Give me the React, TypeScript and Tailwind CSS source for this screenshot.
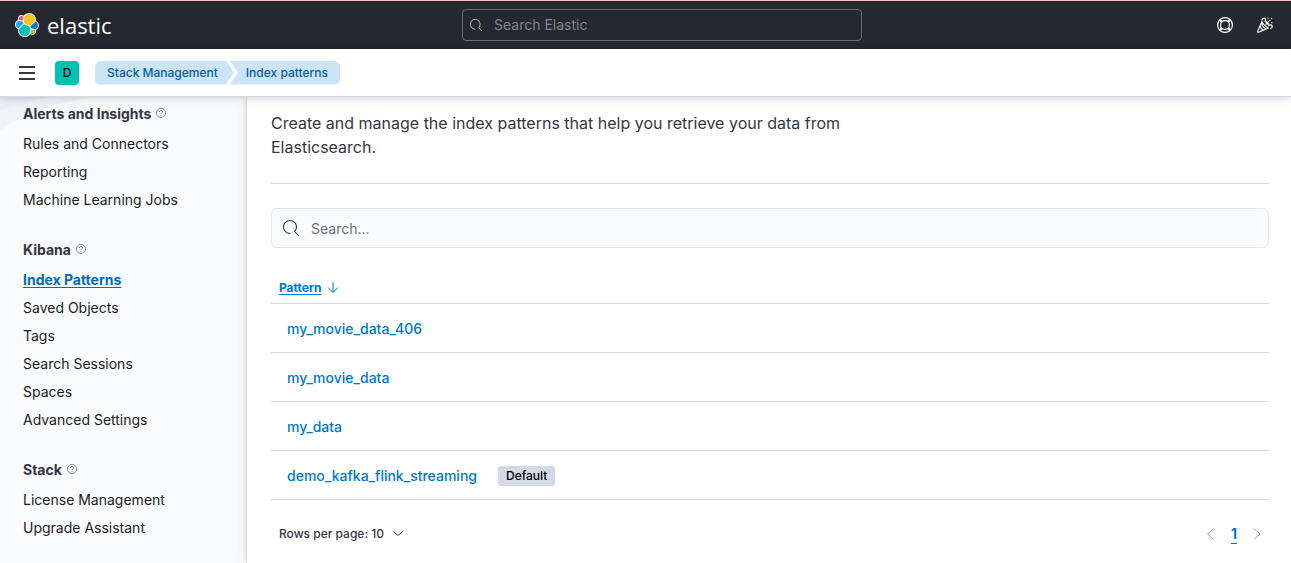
import React from "react";

type NavSection = { title: string; items: string[] };

const SECTIONS: NavSection[] = [
  { title: "Alerts and Insights", items: ["Rules and Connectors", "Reporting", "Machine Learning Jobs"] },
  {
    title: "Kibana",
    items: ["Index Patterns", "Saved Objects", "Tags", "Search Sessions", "Spaces", "Advanced Settings"],
  },
  { title: "Stack", items: ["License Management", "Upgrade Assistant"] },
];

const PATTERNS = [
  { name: "my_movie_data_406", isDefault: false },
  { name: "my_movie_data", isDefault: false },
  { name: "my_data", isDefault: false },
  { name: "demo_kafka_flink_streaming", isDefault: true },
];

function ElasticLogo() {
  return (
    <svg viewBox="0 0 32 32" className="h-6 w-6" aria-hidden="true">
      <path fill="#FFF" d="M32 16.77c0-2.682-1.664-5.023-4.163-5.937.11-.569.164-1.14.164-1.735C28.001 4.08 23.93 0 18.921 0c-2.93 0-5.656 1.406-7.367 3.784a4.789 4.789 0 00-2.944-.997c-2.652 0-4.81 2.162-4.81 4.82 0 .577.103 1.14.3 1.667C1.652 10.23 0 12.604 0 15.251c0 2.692 1.674 5.041 4.184 5.957-.109.554-.165 1.142-.165 1.735 0 5.003 4.06 9.074 9.05 9.074 2.93 0 5.646-1.412 7.348-3.791a4.75 4.75 0 002.944 1.02c2.652 0 4.81-2.163 4.81-4.82a4.8 4.8 0 00-.3-1.668C30.347 21.792 32 19.418 32 16.77" />
      <path fill="#FEC514" d="M12.58 13.787l7.002 3.211 7.066-6.213a7.849 7.849 0 00.152-1.557c0-4.287-3.464-7.774-7.722-7.774-2.549 0-4.928 1.267-6.366 3.388l-1.176 6.127 1.045 2.818z" />
      <path fill="#00BFB3" d="M5.333 21.228a7.938 7.938 0 00-.15 1.58c0 4.299 3.478 7.8 7.753 7.8 2.57 0 4.968-1.279 6.409-3.42l1.166-6.105-1.556-2.99-7.03-3.217-6.592 6.352z" />
      <path fill="#F04E98" d="M5.288 9.071l4.8 1.138L11.14 4.73a3.785 3.785 0 00-2.306-.78 3.83 3.83 0 00-3.546 5.12z" />
      <path fill="#1BA9F5" d="M4.87 10.214c-2.14.713-3.596 2.782-3.596 5.047 0 2.206 1.358 4.173 3.398 4.953l6.733-6.115-1.236-2.653-5.3-1.232z" />
      <path fill="#93C90E" d="M20.87 27.19a3.773 3.773 0 002.294.785 3.83 3.83 0 003.543-5.116l-4.794-1.126-1.044 5.457z" />
      <path fill="#07C" d="M21.844 20.479l5.278 1.24c2.14-.713 3.595-2.782 3.595-5.049 0-2.201-1.36-4.165-3.404-4.946l-6.902 6.067 1.433 2.688z" />
    </svg>
  );
}

function SearchIcon({ className }: { className: string }) {
  return (
    <svg viewBox="0 0 16 16" fill="currentColor" className={className} aria-hidden="true">
      <path d="M11.271 11.978l3.872 3.873a.502.502 0 00.708 0 .502.502 0 000-.708l-3.565-3.564c2.38-2.747 2.267-6.923-.342-9.532-2.73-2.73-7.17-2.73-9.898 0-2.728 2.729-2.728 7.17 0 9.9a6.955 6.955 0 004.949 2.05.5.5 0 000-1 5.96 5.96 0 01-4.242-1.757 6.01 6.01 0 010-8.486 6.004 6.004 0 018.484 0 6.01 6.01 0 010 8.486.5.5 0 00.034.738z" />
    </svg>
  );
}

function HelpRingIcon() {
  return (
    <svg viewBox="0 0 16 16" fill="none" stroke="currentColor" className="h-4 w-4" aria-hidden="true">
      <circle cx="8" cy="8" r="7.4" strokeWidth="1.2" />
      <circle cx="8" cy="8" r="4.4" strokeWidth="1.2" />
      <path strokeWidth="2.2" d="M3 3l1.900 1.900M13 3l-1.900 1.900M3 13l1.900-1.900M13 13l-1.900-1.900" />
    </svg>
  );
}

function CheerIcon() {
  return (
    <svg viewBox="0 0 16 16" fill="none" stroke="currentColor" strokeLinecap="round" strokeLinejoin="round" className="h-4 w-4" aria-hidden="true">
      <path strokeWidth="1.1" d="M4.800 4.600L.7 14.400c-.2.6.3 1 .9.8l9.700-4.300M4.800 4.600c1.300 2.900 3.600 5 6.500 6.300M4.800 4.600c-.4 3.500 1.400 6.700 4.400 7.200M3.200 8.900c.3 2.200 1.700 4 3.600 4.400" />
      <path strokeWidth="1.1" d="M4.900 3.300C5.200 1.600 6.600.6 7.700 1.200c1.100.7.9 2.200.3 3.400M8.800 7.400l2.800-2.800M9.300 4.500v2.400h2.400M11.200 8.400c1.600-.7 3.400-.5 3.900.6.4 1.100-.4 2.200-1.500 2.400" />
      <path strokeWidth="1.3" d="M11 1.200v.1M14.600 1.400v.1M12.800 3.300v.1M14.800 5.600v.1" />
    </svg>
  );
}

function QuestionIcon() {
  return (
    <svg viewBox="0 0 16 16" fill="none" stroke="currentColor" className="mb-[2px] h-[10px] w-[10px] text-[#69707d]" aria-hidden="true">
      <circle cx="8" cy="8" r="7.3" strokeWidth="1.2" />
      <path strokeWidth="1.4" d="M5.6 6.3c0-1.4 1-2.4 2.5-2.4s2.4.9 2.4 2.1c0 1.8-2.4 1.8-2.4 3.7M8.1 11v1.6" />
    </svg>
  );
}

function TopBar() {
  return (
    <header className="flex h-[49px] items-center border-t border-[#f2bcc3] bg-[#25282f] pl-[15px] pr-[18px] text-white">
      <div className="flex flex-1">
        <a href="#home" aria-label="Elastic home" className="flex items-center gap-2">
          <ElasticLogo />
          <span className="font-['Open_Sans',sans-serif] text-[22px] leading-8">elastic</span>
        </a>
      </div>
      <div className="ml-9 flex h-8 w-[400px] items-center gap-3 rounded border border-[#6b6e75] bg-[#25282f] px-[7px]">
        <SearchIcon className="h-3 w-3 shrink-0 text-[#c5c7cc]" />
        <input
          type="search"
          aria-label="Search Elastic"
          placeholder="Search Elastic"
          className="min-w-0 flex-1 bg-transparent text-sm text-white outline-none placeholder:text-[#81858f]"
        />
      </div>
      <div className="flex flex-1 justify-end gap-6">
        <button type="button" aria-label="Help menu">
          <HelpRingIcon />
        </button>
        <button type="button" aria-label="What's new">
          <CheerIcon />
        </button>
      </div>
    </header>
  );
}

function BreadcrumbBar() {
  return (
    <div className="relative z-10 flex h-12 items-center border-b border-[#d3dae6] bg-white pl-[19px] shadow-[0_1px_5px_rgba(0,0,0,0.1),0_4px_13px_rgba(0,0,0,0.07)]">
      <button type="button" aria-label="Toggle primary navigation" className="flex h-4 w-4 flex-col items-stretch justify-center gap-1">
        <span className="h-[2px] bg-[#343741]" />
        <span className="h-[2px] bg-[#343741]" />
        <span className="h-[2px] bg-[#343741]" />
      </button>
      <button type="button" aria-label="Default space" className="ml-5 h-6 w-6 rounded bg-[#00bfb3] text-xs font-medium text-black">
        D
      </button>
      <nav aria-label="Breadcrumbs" className="ml-4 flex text-xs font-medium leading-6 text-[#0061a6]">
        <a href="#management" className="rounded-l-md bg-[#cce4f5] pl-3 pr-4 [clip-path:polygon(0_0,calc(100%_-_8px)_0,100%_50%,calc(100%_-_8px)_100%,0_100%)]">
          Stack Management
        </a>
        <span aria-current="page" className="-ml-1 rounded-r-md bg-[#cce4f5] pl-4 pr-3 [clip-path:polygon(0_0,100%_0,100%_100%,0_100%,8px_50%)]">
          Index patterns
        </span>
      </nav>
    </div>
  );
}

function Sidebar() {
  return (
    <aside className="relative w-[247px] shrink-0 overflow-hidden bg-[#fafbfd] pl-[23px] pt-px">
      <svg viewBox="0 0 120 36" className="absolute left-0 top-0 h-9 w-[120px]" aria-hidden="true">
        <path d="M0 0h92C55 6 24 17 0 33z" fill="#f0f3f8" />
        <path d="M0 0h48C30 4 14 8 0 13z" fill="#e9edf4" />
      </svg>
      <nav aria-label="Stack Management" className="relative flex flex-col gap-5 text-sm">
        {SECTIONS.map((section) => (
          <section key={section.title}>
            <h2 className="flex h-8 items-center gap-[5px] font-bold text-[#343741]">
              {section.title}
              <QuestionIcon />
            </h2>
            <ul>
              {section.items.map((item) => (
                <li key={item} className="flex h-7 items-center">
                  <a
                    href="#section"
                    className={
                      item === "Index Patterns"
                        ? "font-bold text-[#006bb8] underline underline-offset-2"
                        : "text-[#1a1c21]"
                    }
                  >
                    {item}
                  </a>
                </li>
              ))}
            </ul>
          </section>
        ))}
      </nav>
    </aside>
  );
}

function PatternTable() {
  return (
    <table className="mt-6 w-full border-separate border-spacing-0 text-left">
      <thead>
        <tr>
          <th scope="col" aria-sort="ascending" className="h-8 border-b border-[#d3dae6] px-2 align-middle">
            <button type="button" className="flex items-center gap-[6px] text-xs font-bold text-[#0077cc]">
              <span className="underline underline-offset-2">Pattern</span>
              <svg viewBox="0 0 12 12" fill="none" stroke="currentColor" className="h-3 w-3" aria-hidden="true">
                <path d="M6 0v10.500M1 5.500l5 5 5-5" />
              </svg>
            </button>
          </th>
        </tr>
      </thead>
      <tbody>
        {PATTERNS.map((pattern) => (
          <tr key={pattern.name}>
            <td className="h-[49px] border-b border-[#d3dae6] px-4 pt-[2px]">
              <div className="flex items-center gap-[21px]">
                <a href="#pattern" className="text-sm font-medium text-[#0077cc]">
                  {pattern.name}
                </a>
                {pattern.isDefault && (
                  <span className="rounded-[3px] bg-[#d3dae6] px-2 text-xs font-medium leading-5 text-black">Default</span>
                )}
              </div>
            </td>
          </tr>
        ))}
      </tbody>
    </table>
  );
}

function Pagination() {
  return (
    <div className="flex items-center justify-between pb-4 pl-2 pr-[6px] pt-[22px]">
      <button type="button" className="flex h-6 items-center gap-2 text-xs font-medium text-[#343741]">
        Rows per page: 10
        <svg viewBox="0 0 12 12" fill="none" stroke="currentColor" className="h-3 w-3" aria-hidden="true">
          <path d="M1.500 3.500L6 7.500l4.500-4" />
        </svg>
      </button>
      <nav aria-label="Pages" className="flex items-center gap-[14px] text-[#98a2b3]">
        <button type="button" aria-label="Previous page" disabled>
          <svg viewBox="0 0 12 12" fill="none" stroke="currentColor" className="h-3 w-3" aria-hidden="true">
            <path d="M8.500 0.500L2.500 6l6 5.500" />
          </svg>
        </button>
        <button type="button" aria-current="page" className="text-sm font-bold text-[#0077cc] underline underline-offset-4">
          1
        </button>
        <button type="button" aria-label="Next page" disabled>
          <svg viewBox="0 0 12 12" fill="none" stroke="currentColor" className="h-3 w-3" aria-hidden="true">
            <path d="M3 0.500L9 6l-6 5.500" />
          </svg>
        </button>
      </nav>
    </div>
  );
}

export default function App() {
  return (
    <div className="flex h-screen flex-col overflow-hidden bg-[#fafbfd] font-['Inter',sans-serif]">
      <TopBar />
      <BreadcrumbBar />
      <div className="flex min-h-0 flex-1">
        <Sidebar />
        <main className="relative min-w-0 flex-1 bg-white pl-6 pr-[22px] pt-[14px] shadow-[0_0_4px_rgba(0,0,0,0.2),0_3px_12px_rgba(0,0,0,0.1)]">
          <p className="max-w-[600px] text-base text-[#343741]">
            Create and manage the index patterns that help you retrieve your data from Elasticsearch.
          </p>
          <hr className="mb-6 mt-6 border-[#d3dae6]" />
          <div className="flex h-10 items-center gap-3 rounded-md border border-[#e0e5ee] bg-[#fbfcfd] px-[11px]">
            <SearchIcon className="h-4 w-4 shrink-0 text-[#343741]" />
            <input
              type="search"
              aria-label="Search index patterns"
              placeholder="Search..."
              className="min-w-0 flex-1 bg-transparent pt-px text-sm text-[#343741] outline-none placeholder:text-[#69707d]"
            />
          </div>
          <PatternTable />
          <Pagination />
        </main>
      </div>
    </div>
  );
}
